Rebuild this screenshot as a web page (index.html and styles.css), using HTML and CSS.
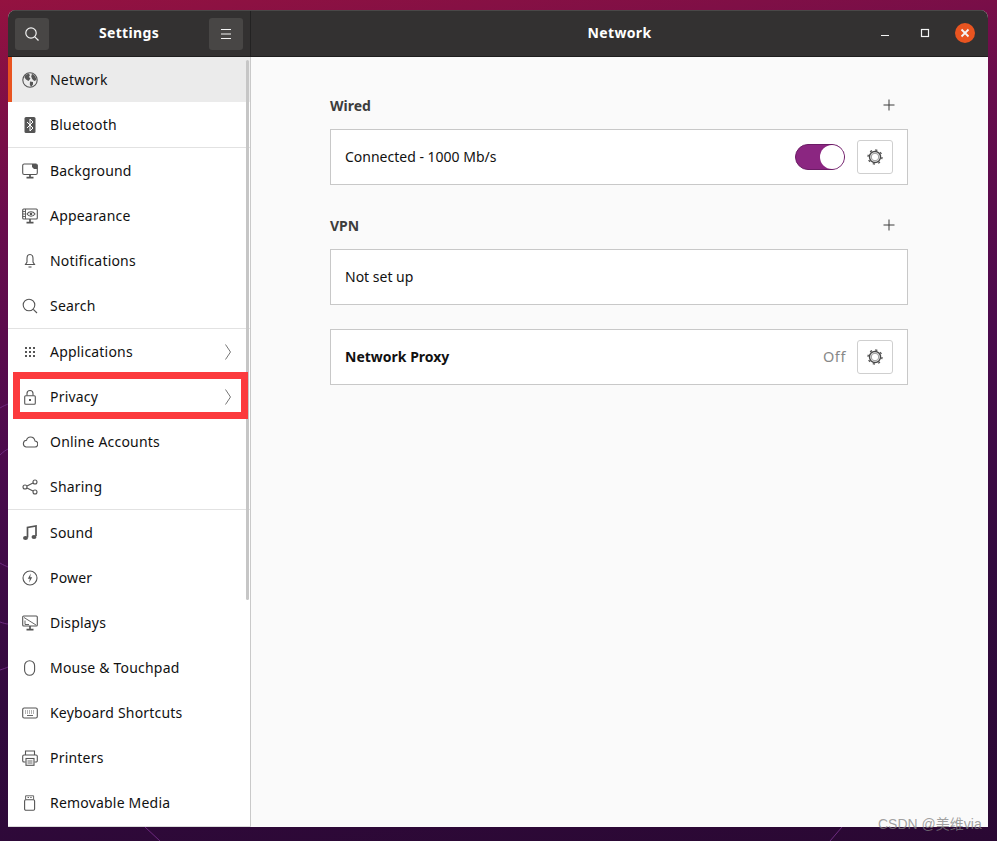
FILE: index.html
```html
<!DOCTYPE html>
<html lang="en">
<head>
<meta charset="utf-8">
<title>Settings</title>
<link rel="stylesheet" href="styles.css">
</head>
<body>
<svg class="wallpaper" viewBox="0 0 997 841" aria-hidden="true">
  <path d="M0 408C3 406 6 405 8 404M0 455C3 452 6 450 8 449M0 563C3 565 6 566 8 567M0 622C3 623 6 624 8 624M0 670C3 669 6 668 8 667M145 827L160 841M830 841L842 827" fill="none" stroke="#6e2a80" stroke-width="1"/>
</svg>
<div class="window">
  <header class="titlebar">
    <div class="title-left">
      <button class="hbtn"><svg width="14" height="14" viewBox="0 0 14 14"><circle cx="6" cy="6" r="5.200" class="hi"/><path d="M9.800 9.800L13.500 13.500" class="hi"/></svg></button>
      <span class="app-title">Settings</span>
      <button class="hbtn"><svg width="16" height="16" viewBox="0 0 16 16"><path d="M3 3.500h10M3 8h10M3 12.500h10" class="hi"/></svg></button>
    </div>
    <div class="title-right">
      <span class="page-title">Network</span>
      <div class="controls">
        <span class="ctl"><svg width="10" height="10" viewBox="0 0 10 10"><path d="M1 7.500h8" class="hi"/></svg></span>
        <span class="ctl"><svg width="10" height="10" viewBox="0 0 10 10"><rect x="1.500" y="1.500" width="7" height="7" class="hi"/></svg></span>
        <span class="ctl close"><svg width="10" height="10" viewBox="0 0 10 10"><path d="M1.500 1.500l7 7M8.500 1.500l-7 7" class="hi bold"/></svg></span>
      </div>
    </div>
  </header>
  <div class="body">
    <nav class="sidebar">
      <div class="row selected"><svg class="ic" viewBox="0 0 16 16"><circle cx="8" cy="8" r="7.200" class="st"/><path class="fl" d="M3 3.500L6.500 1.500 8 3 7 5 8.500 6.500 6.500 9 4 7.500 2.500 5.500ZM10 1.800l3.200 2.200 1.300 4-2.300 1-2-2-1-2.500ZM8 9.500l3 .5 0 2.500-2 2.500-1.200-2.500Z"/></svg><span>Network</span></div>
      <div class="row"><svg class="ic" viewBox="0 0 16 16"><rect x="2.500" y="0" width="11" height="16" rx="1.500" class="fl"/><path d="M5 5l6 6-3 3V2l3 3-6 6" fill="none" stroke="#fff"/></svg><span>Bluetooth</span></div>
      <hr class="sep">
      <div class="row"><svg class="ic" viewBox="0 0 16 16"><rect x=".7" y="1" width="14.600" height="10.500" rx="1.500" class="st"/><path class="fl" d="M10 1h4l1.500 1.500V6h-3.500L10 4Z"/><path class="st thick" d="M8 11.500V14M4.500 14.700h7"/></svg><span>Background</span></div>
      <div class="row"><svg class="ic" viewBox="0 0 16 16"><rect x=".7" y="1" width="14.600" height="10" rx="1" class="st"/><path class="st thin" d="M3.500 1v10M.7 3.500h2.800M.7 6h2.800M.7 8.500h2.800"/><path class="st" d="M5 6c2-3 6-3 8 0-2 3-6 3-8 0Z"/><circle cx="9" cy="6" r="1.300" class="fl"/><path class="st thick" d="M8 11v3M4.500 14.700h7"/></svg><span>Appearance</span></div>
      <div class="row"><svg class="ic" viewBox="0 0 16 16"><path class="st" d="M8 1.500c-2.300 0-3 2-3 4v3.500L3.500 11.500h9L11 9V5.500c0-2-.7-4-3-4Z"/><path class="st" d="M6.500 14h3"/></svg><span>Notifications</span></div>
      <div class="row"><svg class="ic" viewBox="0 0 16 16"><circle cx="7" cy="7" r="5.800" class="st"/><path d="M11.300 11.300L15 15" class="st"/></svg><span>Search</span></div>
      <hr class="sep">
      <div class="row"><svg class="ic" viewBox="0 0 16 16"><path class="fl" d="M3 3h2v2H3zM7 3h2v2H7zM11 3h2v2h-2zM3 7h2v2H3zM7 7h2v2H7zM11 7h2v2h-2zM3 11h2v2H3zM7 11h2v2H7zM11 11h2v2h-2z"/></svg><span>Applications</span><svg class="chev" viewBox="0 0 6 16"><path d="M.5 .5L5.500 8 .5 15.500"/></svg></div>
      <div class="row"><svg class="ic" viewBox="0 0 16 16"><rect x="2.700" y="6.700" width="10.600" height="8.600" rx="1" class="st"/><path class="st" d="M5 6.500V4.500a3 3 0 0 1 6 0v2"/><rect x="7" y="10" width="2" height="2" class="fl"/></svg><span>Privacy</span><svg class="chev" viewBox="0 0 6 16"><path d="M.5 .5L5.500 8 .5 15.500"/></svg></div>
      <div class="row"><svg class="ic" viewBox="0 0 16 16"><path class="st" d="M4 13h8.500a3 3 0 0 0 .5-6C12.500 4.500 10.500 3 8.500 3 6.500 3 5 4.300 4.500 6.300A3.400 3.400 0 0 0 4 13Z"/></svg><span>Online Accounts</span></div>
      <div class="row"><svg class="ic" viewBox="0 0 16 16"><circle cx="3" cy="8" r="2" class="st"/><circle cx="13" cy="3" r="2" class="st"/><circle cx="13" cy="13" r="2" class="st"/><path class="st" d="M5 7l6-3M5 9l6 3"/></svg><span>Sharing</span></div>
      <hr class="sep">
      <div class="row"><svg class="ic" viewBox="0 0 16 16"><path class="st thick" d="M5.500 12.500V2.500L14 1v10"/><ellipse cx="3.500" cy="13" rx="2.500" ry="2" class="fl"/><ellipse cx="12" cy="12" rx="2.500" ry="2" class="fl"/></svg><span>Sound</span></div>
      <div class="row"><svg class="ic" viewBox="0 0 16 16"><circle cx="8" cy="8" r="7" class="st"/><path class="fl" d="M8.800 3.500L5.800 8.800h2L7.200 12.500l3-5.300h-2Z"/></svg><span>Power</span></div>
      <div class="row"><svg class="ic" viewBox="0 0 16 16"><rect x=".7" y="1" width="14.600" height="10" rx="1" class="st"/><path class="st thin" d="M2 2.500l12 7.500"/><path class="st thin" d="M3 5.500v4h4"/><path class="st thick" d="M8 11v3M4.500 14.700h7"/></svg><span>Displays</span></div>
      <div class="row"><svg class="ic" viewBox="0 0 16 16"><rect x="2.600" y=".7" width="10" height="14.600" rx="5" class="st"/></svg><span>Mouse &amp; Touchpad</span></div>
      <div class="row"><svg class="ic" viewBox="0 0 16 16"><rect x=".7" y="3" width="14.600" height="10" rx="1.500" class="st"/><path class="st thin dots" d="M3 6h10M3 8h10"/><path class="st thin" d="M5 10.500h6"/></svg><span>Keyboard Shortcuts</span></div>
      <div class="row"><svg class="ic" viewBox="0 0 16 16"><path class="st" d="M3.500 5V1h9v4M3.500 12H2a1.300 1.300 0 0 1-1.300-1.300V6.300A1.300 1.300 0 0 1 2 5h12a1.300 1.300 0 0 1 1.300 1.300v4.400A1.300 1.300 0 0 1 14 12h-1.500"/><rect x="4" y="8.500" width="8" height="6.800" class="st"/><path class="st thin" d="M5.500 11h5M5.500 13h5"/></svg><span>Printers</span></div>
      <div class="row"><svg class="ic" viewBox="0 0 16 16"><rect x="2.600" y="4.700" width="10" height="10.600" rx="1.200" class="st"/><path class="st thin" d="M3.600 4.500V.8h8v3.700"/><path class="fl" d="M5.600 2h1.300v1H5.600zM8.300 2h1.300v1H8.300z"/></svg><span>Removable Media</span></div>
      <div class="scrollbar"></div>
    </nav>
    <main class="content">
      <section class="column">
        <div class="group-head"><h2>Wired</h2><svg class="plus" viewBox="0 0 12 12"><path d="M6 .5v11M.5 6h11"/></svg></div>
        <div class="card">
          <span class="grow">Connected - 1000 Mb/s</span>
          <div class="switch"><span class="knob"></span></div>
          <button class="gear"><svg width="18" height="18" viewBox="0 0 18 18"><circle cx="9" cy="9" r="7" class="teeth"/><circle cx="9" cy="9" r="5.500" class="ring"/><circle cx="9" cy="9" r="3.800" class="ring-in"/></svg></button>
        </div>
        <div class="group-head vpn"><h2>VPN</h2><svg class="plus" viewBox="0 0 12 12"><path d="M6 .5v11M.5 6h11"/></svg></div>
        <div class="card"><span class="grow">Not set up</span></div>
        <div class="card proxy">
          <strong class="grow">Network Proxy</strong>
          <span class="off">Off</span>
          <button class="gear"><svg width="18" height="18" viewBox="0 0 18 18"><circle cx="9" cy="9" r="7" class="teeth"/><circle cx="9" cy="9" r="5.500" class="ring"/><circle cx="9" cy="9" r="3.800" class="ring-in"/></svg></button>
        </div>
      </section>
    </main>
  </div>
</div>
<div class="highlight"></div>
<div class="watermark">CSDN @美维via</div>
</body>
</html>
```
FILE: styles.css
```css
* { box-sizing: border-box; }
html, body { height: 100%; }
body {
  margin: 0;
  padding: 10px 9px 14px 8px;
  overflow: hidden;
  position: relative;
  background: linear-gradient(172deg, #941240 0%, #6a0c4c 22%, #4a0a4c 48%, #320a3e 72%, #2a0833 100%);
  font-family: "Noto Sans", sans-serif;
  font-size: 14px;
  color: #111;
}
.wallpaper { position: absolute; left: 0; top: 0; width: 997px; height: 841px; }
.window {
  position: relative;
  height: 817px;
  display: flex;
  flex-direction: column;
  border-radius: 8px 8px 0 0;
  overflow: hidden;
  background: #fafafa;
}
.titlebar {
  display: flex;
  height: 47px;
  flex: none;
  background: #333131;
  border-top: 1px solid #4a4848;
  border-bottom: 1px solid #1f1e1e;
  color: #fff;
}
.title-left {
  width: 243px;
  flex: none;
  display: flex;
  align-items: center;
  justify-content: space-between;
  padding: 0 7px;
  border-right: 1px solid #232222;
}
.hbtn {
  width: 34px;
  height: 32px;
  padding: 0;
  border: 0;
  border-radius: 3px;
  background: #484645;
  display: flex;
  align-items: center;
  justify-content: center;
}
.hi { fill: none; stroke: #f4f4f4; stroke-width: 1.200; }
.hi.bold { stroke-width: 1.800; }
.app-title, .page-title { font-weight: 700; font-size: 14px; letter-spacing: .35px; margin-top: -2px; }
.title-right {
  flex: 1;
  position: relative;
  display: flex;
  align-items: center;
  justify-content: center;
}
.controls {
  position: absolute;
  right: 13px;
  top: 12px;
  display: flex;
  gap: 20px;
}
.ctl {
  width: 20px;
  height: 20px;
  display: flex;
  align-items: center;
  justify-content: center;
}
.close { background: #e95420; border-radius: 50%; }
.body { flex: 1; display: flex; min-height: 0; }
.sidebar {
  position: relative;
  width: 243px;
  flex: none;
  background: #fff;
  border-right: 1px solid #c9c9c9;
  border-bottom: 1px solid #dcdcdc;
  overflow: hidden;
}
.row {
  height: 45px;
  display: flex;
  align-items: center;
  padding-left: 14px;
  gap: 12px;
}
.row.selected { background: #ebebeb; box-shadow: inset 4px 0 0 #e95420; }
.row span { flex: 1; letter-spacing: .2px; margin-top: -1px; }
.ic { width: 16px; height: 16px; flex: none; }
.st { fill: none; stroke: #555; stroke-width: 1.100; }
.st.thick { stroke-width: 1.700; }
.st.thin { stroke-width: .9; }
.st.dots { stroke-dasharray: 1 1; }
.fl { fill: #555; }
.chev {
  width: 6px;
  height: 16px;
  flex: none;
  margin-right: 19px;
  fill: none;
  stroke: #666;
  stroke-width: .9;
}
.sep { margin: 0; height: 1px; border: 0; background: #e2e2e2; }
.scrollbar {
  position: absolute;
  left: 238px;
  top: 3px;
  width: 3px;
  height: 540px;
  border-radius: 2px;
  background: #c6c6c6;
}
.content { flex: 1; display: flex; justify-content: center; background: #fafafa; padding-right: 1px; }
.column { width: 578px; padding-top: 38px; }
.group-head {
  height: 20px;
  display: flex;
  align-items: center;
  justify-content: space-between;
  padding-right: 13px;
  margin-bottom: 14px;
}
.group-head.vpn { margin-top: 30px; }
h2 { margin: 0; font-size: 14px; font-weight: 700; color: #3d3d3d; }
.plus { width: 12px; height: 12px; fill: none; stroke: #3d3d3d; stroke-width: 1; }
.card {
  height: 56px;
  display: flex;
  align-items: center;
  padding: 0 14px;
  background: #fff;
  border: 1px solid #c8c8c8;
}
.card.proxy { margin-top: 24px; }
.grow { flex: 1; margin-top: -2px; }
.switch {
  width: 50px;
  height: 26px;
  border-radius: 13px;
  background: #8b2681;
  border: 1px solid #6c1c66;
  display: flex;
  justify-content: flex-end;
  margin-right: 12px;
}
.knob { width: 24px; height: 24px; border-radius: 50%; background: #fff; }
.off { color: #888; margin-right: 11px; font-size: 14.500px; letter-spacing: .6px; margin-top: -2px; }
.gear {
  width: 36px;
  height: 34px;
  padding: 0;
  border: 1px solid #cfcfcf;
  border-radius: 3px;
  background: #fff;
  display: flex;
  align-items: center;
  justify-content: center;
}
.gear svg { margin: -1px 0 0 -1px; }
.teeth { fill: none; stroke: #555; stroke-width: 1.300; stroke-dasharray: 2.200 3.300; }
.ring { fill: #fff; stroke: #4a4a4a; stroke-width: 1.400; }
.ring-in { fill: #fff; stroke: #999; stroke-width: 1; }
.highlight {
  position: absolute;
  left: 13px;
  top: 372px;
  width: 235px;
  height: 47px;
  border: 7px solid #fc3a3d;
}
.watermark {
  position: absolute;
  left: 878px;
  top: 813px;
  font-family: "Liberation Sans", "Noto Sans CJK SC", sans-serif;
  font-size: 14px;
  color: rgba(130, 130, 130, .75);
}
```
